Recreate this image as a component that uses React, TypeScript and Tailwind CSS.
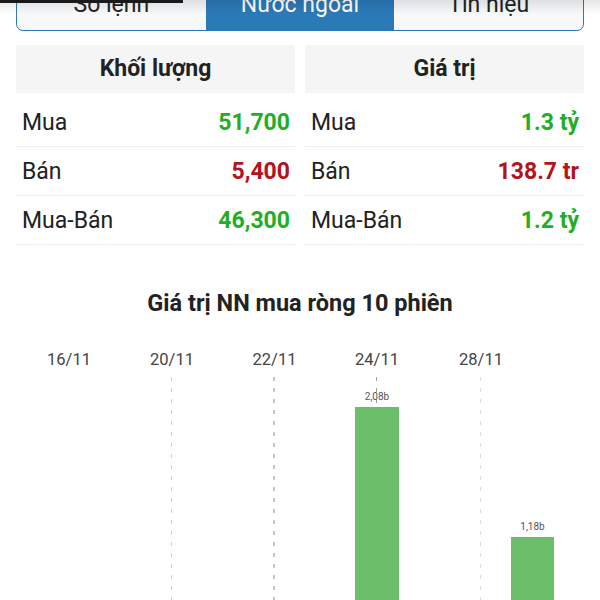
import React from "react";

const rows = [
  { label: "Mua", vol: "51,700", val: "1.3 tỷ", color: "text-[#1fae24]" },
  { label: "Bán", vol: "5,400", val: "138.7 tr", color: "text-[#b5121b]" },
  { label: "Mua-Bán", vol: "46,300", val: "1.2 tỷ", color: "text-[#1fae24]" },
];

function Table({ title, keyName }: { title: string; keyName: "vol" | "val" }) {
  return (
    <div className="flex flex-col">
      <div className="h-[48px] pt-[1px] bg-[#f5f5f5] flex items-center justify-center text-[23px] font-bold text-[#222]">
        {title}
      </div>
      <div className="h-[5px]" />
      {rows.map((r) => (
        <div
          key={r.label}
          className="h-[49px] pt-[2px] border-b border-[#eeeeee] flex items-center justify-between pl-[6px] pr-[5px] text-[23px]"
        >
          <span className="text-[#222]">{r.label}</span>
          <span className={`font-bold ${r.color}`}>{r[keyName]}</span>
        </div>
      ))}
    </div>
  );
}

export default function App() {
  const dates = [
    { t: "16/11", x: 69, line: null as string | null },
    { t: "20/11", x: 172, line: "#d0d0d0" },
    { t: "22/11", x: 274.5, line: "#8a8a8a" },
    { t: "24/11", x: 377, line: "#9a9a9a" },
    { t: "28/11", x: 481, line: "#dcdcdc" },
  ];
  return (
    <div
      className="relative w-[600px] h-[600px] overflow-hidden bg-white"
      style={{ fontFamily: "Roboto, 'Noto Sans', sans-serif" }}
    >
      <div className="mx-4 -mt-[21px] h-[52px] flex border border-[#2a7ab8] rounded-b-[7px] overflow-hidden text-[23px] bg-[#f6f8fa]">
        <div className="flex-1 flex items-center justify-center text-[#222]">Sổ lệnh</div>
        <div className="flex-1 flex items-center justify-center bg-[#2a7ab8] text-white">Nước ngoài</div>
        <div className="flex-1 flex items-center justify-center text-[#222]">Tín hiệu</div>
      </div>

      <div className="mt-[14px] px-4 grid grid-cols-2 gap-[10px]">
        <Table title="Khối lượng" keyName="vol" />
        <Table title="Giá trị" keyName="val" />
      </div>

      <div className="mt-[45px] h-[28px] flex items-center justify-center text-[23.5px] font-bold text-[#222]">
        Giá trị NN mua ròng 10 phiên
      </div>

      <svg width="600" height="300" className="block mt-[11px]">
        {dates.map((d) => (
          <g key={d.t}>
            <text
              x={d.x}
              y={36}
              textAnchor="middle"
              fontSize="16.5"
              fill="#444"
              fontFamily="Roboto, sans-serif"
            >
              {d.t}
            </text>
            {d.line && (
              <line
                x1={d.x - 0.5}
                x2={d.x - 0.5}
                y1={48}
                y2={300}
                stroke={d.line}
                strokeWidth="1"
                strokeDasharray="4 7"
              />
            )}
          </g>
        ))}
        <rect x={355} y={78} width={44} height={230} fill="#6cbf6a" />
        <rect x={511} y={208} width={43} height={100} fill="#6cbf6a" />
        <text x={377} y={71} textAnchor="middle" fontSize="10" fill="#555" fontFamily="Roboto, sans-serif">
          2,08b
        </text>
        <text x={532.5} y={201} textAnchor="middle" fontSize="10" fill="#555" fontFamily="Roboto, sans-serif">
          1,18b
        </text>
      </svg>

      <div className="absolute top-0 left-0 right-0 h-[14px] bg-gradient-to-b from-black/10 to-transparent pointer-events-none" />
      <div className="absolute top-0 left-0 w-[183px] h-[3px] bg-[#1a1a1a]" />
    </div>
  );
}
